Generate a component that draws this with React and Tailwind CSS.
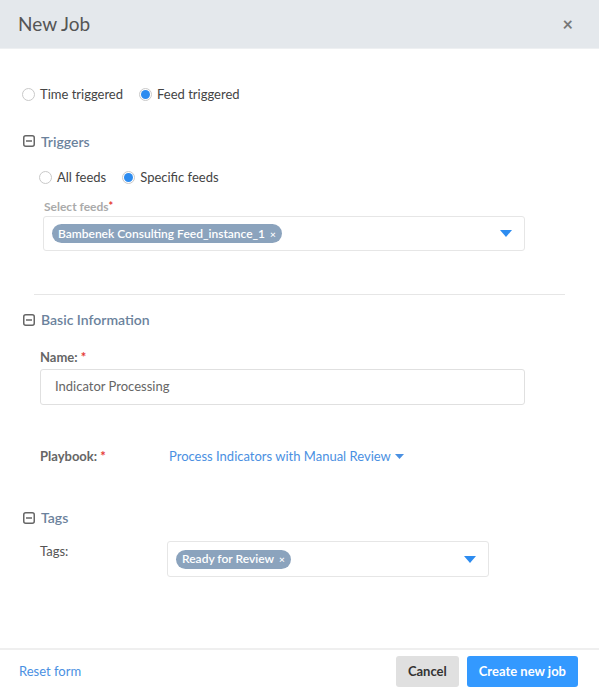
import React from 'react';

function Radio({ checked, label }) {
  return (
    <label className="flex items-center gap-[5px]">
      <span className="w-[13px] h-[13px] rounded-full border border-[#c9c9c9] flex items-center justify-center bg-white">
        {checked && <span className="w-[9px] h-[9px] rounded-full bg-[#2d8cf0]" />}
      </span>
      <span>{label}</span>
    </label>
  );
}

function SectionTitle({ children }) {
  return (
    <div className="flex items-center gap-[6px] text-[#6b829c] text-[14px] font-semibold">
      <svg width="12" height="12" viewBox="0 0 12 12" className="text-[#666]">
        <rect x="0.75" y="0.75" width="10.5" height="10.5" rx="2" fill="none" stroke="currentColor" strokeWidth="1.5" />
        <line x1="3" y1="6" x2="9" y2="6" stroke="currentColor" strokeWidth="1.5" />
      </svg>
      <span>{children}</span>
    </div>
  );
}

function Chip({ children }) {
  return (
    <span className="inline-flex items-center h-[19px] px-[6px] rounded-full bg-[#8ba3bd] text-white text-[12px] font-semibold gap-[5px]">
      {children}
      <span className="text-[10px] leading-none">×</span>
    </span>
  );
}

function Caret() {
  return (
    <svg width="12" height="7" viewBox="0 0 12 7">
      <path d="M0 0 L12 0 L6 7 Z" fill="#2d8cf0" />
    </svg>
  );
}

export default function App() {
  return (
    <div
      className="w-[599px] h-[693px] bg-white flex flex-col text-[13px] text-[#444]"
      style={{ fontFamily: 'Lato, "Open Sans", sans-serif' }}
    >
      <header className="h-[49px] bg-[#e4e8ec] border-b border-[#eef0f2] flex items-center justify-between pl-[18px] pr-[26px] shrink-0">
        <h1 className="text-[19px] text-[#555]">New Job</h1>
        <span className="text-[#777] text-[18px] font-bold leading-none">×</span>
      </header>

      <div className="flex-1 flex flex-col">
        <div className="flex items-center gap-[16px] pl-[22px] pt-[36px]">
          <Radio label="Time triggered" />
          <Radio checked label="Feed triggered" />
        </div>

        <div className="pl-[23px] pt-[26px]">
          <SectionTitle>Triggers</SectionTitle>
        </div>

        <div className="flex items-center gap-[16px] pl-[39px] pt-[16px]">
          <Radio label="All feeds" />
          <Radio checked label="Specific feeds" />
        </div>

        <div className="pl-[44px] pt-[11px] text-[12px] font-bold text-[#aaa]">
          Select feeds<span className="text-[#e53935] align-top text-[11px]">*</span>
        </div>
        <div className="ml-[43px] w-[482px] h-[35px] border border-[#e6e6e6] rounded-[3px] flex items-center justify-between pl-[8px] pr-[12px]">
          <Chip>Bambenek Consulting Feed_instance_1</Chip>
          <Caret />
        </div>

        <div className="mx-[34px] mt-[43px] border-t border-[#e6e6e6]" />

        <div className="pl-[23px] pt-[14px]">
          <SectionTitle>Basic Information</SectionTitle>
        </div>

        <div className="pl-[40px] pt-[18px] text-[13px] font-bold text-[#666]">
          Name: <span className="text-[#e53935]">*</span>
        </div>
        <div className="ml-[40px] w-[485px] h-[36px] mt-[1px] border border-[#e0e0e0] rounded-[3px] flex items-center pl-[14px] text-[#666]">
          Indicator Processing
        </div>

        <div className="flex items-center pl-[40px] pt-[42px]">
          <span className="w-[129px] font-bold text-[#666]">
            Playbook: <span className="text-[#e53935]">*</span>
          </span>
          <span className="flex items-center gap-[4px] text-[#4a90e2]">
            Process Indicators with Manual Review
            <svg width="9" height="5" viewBox="0 0 9 5">
              <path d="M0 0 L9 0 L4.5 5 Z" fill="#4a90e2" />
            </svg>
          </span>
        </div>

        <div className="pl-[23px] pt-[41px]">
          <SectionTitle>Tags</SectionTitle>
        </div>

        <div className="flex items-start pl-[40px] pt-[13px]">
          <span className="w-[127px] pt-[1px] text-[#555]">Tags:</span>
          <div className="w-[322px] h-[36px] border border-[#e6e6e6] rounded-[3px] flex items-center justify-between pl-[8px] pr-[12px]">
            <Chip>Ready for Review</Chip>
            <Caret />
          </div>
        </div>
      </div>

      <footer className="h-[45px] border-t-2 border-[#efefef] flex items-center justify-between pl-[19px] pr-[21px] shrink-0">
        <span className="text-[#4a90e2]">Reset form</span>
        <div className="flex items-center gap-[8px]">
          <button className="h-[31px] px-[12px] rounded-[3px] bg-[#e0e0e0] text-[#333] font-bold">Cancel</button>
          <button className="h-[31px] px-[12px] rounded-[3px] bg-[#3399ff] text-white font-bold">Create new job</button>
        </div>
      </footer>
    </div>
  );
}
